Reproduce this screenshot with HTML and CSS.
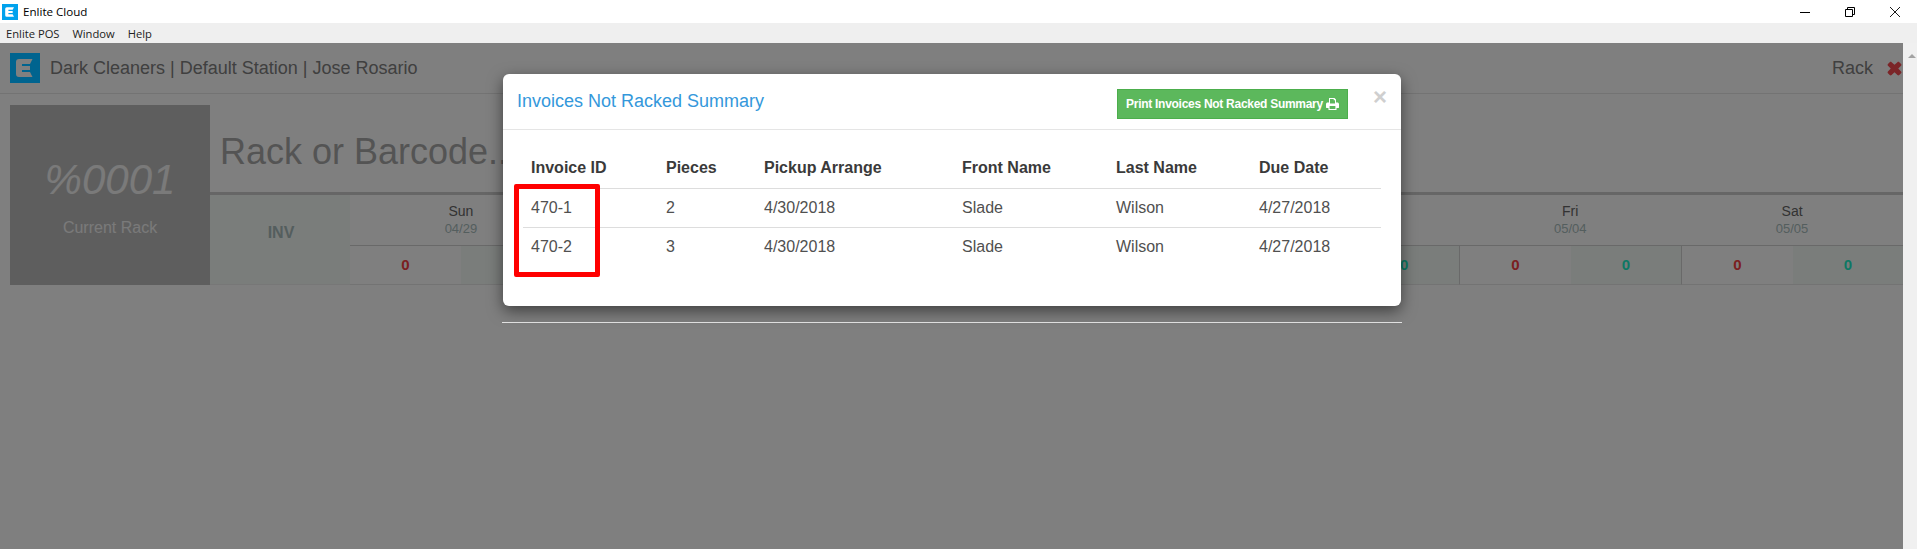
FILE: index.html
```html
<!DOCTYPE html>
<html lang="en">
<head>
<meta charset="utf-8">
<title>Enlite Cloud</title>
<link rel="stylesheet" href="styles.css">
</head>
<body>
<header class="titlebar">
  <div class="title-left">
    <svg class="app-icon" viewBox="0 0 30 30"><rect width="30" height="30" fill="#00a2ed"/><path d="M9 6H22.500L20 11H12V13H20V17H12V19H20L22.500 24H9Q6 24 6 21V9Q6 6 9 6z" fill="#fff"/></svg>
    <span>Enlite Cloud</span>
  </div>
  <div class="win-controls">
    <svg viewBox="0 0 10 10"><path d="M0 5.500h10" stroke="#000" fill="none"/></svg>
    <svg viewBox="0 0 10 10"><path d="M.5 2.500h7v7h-7zM2.500 2.500v-2h7v7h-2" stroke="#000" fill="none"/></svg>
    <svg viewBox="0 0 10 10"><path d="M0 0l10 10M10 0L0 10" stroke="#000" fill="none" stroke-width=".9"/></svg>
  </div>
</header>
<nav class="menubar"><span>Enlite POS</span><span>Window</span><span>Help</span></nav>
<div class="workspace">
  <div class="app">
    <div class="app-header">
      <div class="brand">
        <svg class="logo" viewBox="0 0 30 30"><rect width="30" height="30" fill="#00648f"/><path d="M9 6H22.500L20 11H12V13H20V17H12V19H20L22.500 24H9Q6 24 6 21V9Q6 6 9 6z" fill="#808080"/></svg>
        <span>Dark Cleaners | Default Station | Jose Rosario</span>
      </div>
      <div class="rack-tools">
        <span>Rack</span>
        <svg class="rack-x" viewBox="0 0 16 17"><path d="M15.400 12.600c0 .4-.1.700-.4 1l-1.900 1.900c-.3.300-.6.400-1 .4s-.7-.1-1-.4L8 12.600l-3.100 2.900c-.3.300-.6.400-1 .4s-.7-.1-1-.4L1 13.600c-.3-.3-.4-.6-.4-1s.1-.7.4-1l3-3-3-3c-.3-.3-.4-.6-.4-1s.1-.7.4-1l1.900-1.900c.3-.3.6-.4 1-.4s.7.1 1 .4L8 4.600l3.100-2.900c.3-.3.6-.4 1-.4s.7.1 1 .4L15 3.600c.3.3.4.600.4 1s-.1.700-.4 1l-3 3 3 3c.3.300.4.600.4 1z" fill="#f64a50"/></svg>
      </div>
    </div>
    <main class="rack-main">
      <section class="current-rack">
        <div class="rack-code">%0001</div>
        <div class="rack-label">Current Rack</div>
      </section>
      <section class="rack-panel">
        <div class="rack-input">Rack or Barcode...</div>
        <div class="week">
          <div class="inv">INV</div>
          <div class="day"><div class="day-head"><div>Sun</div><small>04/29</small></div><div class="day-cells first"><b class="out">0</b><b class="in">0</b></div></div>
          <div class="day"><div class="day-head"><div>Mon</div><small>04/30</small></div><div class="day-cells"><b class="out">0</b><b class="in">0</b></div></div>
          <div class="day"><div class="day-head"><div>Tue</div><small>05/01</small></div><div class="day-cells"><b class="out">0</b><b class="in">0</b></div></div>
          <div class="day"><div class="day-head"><div>Wed</div><small>05/02</small></div><div class="day-cells"><b class="out">0</b><b class="in">0</b></div></div>
          <div class="day"><div class="day-head"><div>Thu</div><small>05/03</small></div><div class="day-cells"><b class="out">0</b><b class="in">0</b></div></div>
          <div class="day"><div class="day-head"><div>Fri</div><small>05/04</small></div><div class="day-cells"><b class="out">0</b><b class="in">0</b></div></div>
          <div class="day"><div class="day-head"><div>Sat</div><small>05/05</small></div><div class="day-cells"><b class="out">0</b><b class="in">0</b></div></div>
        </div>
      </section>
    </main>
    <div class="backdrop"></div>
    <div class="back-line"></div>
    <div class="modal">
      <div class="modal-head">
        <h4>Invoices Not Racked Summary</h4>
        <button class="print-btn">Print Invoices Not Racked Summary
          <svg viewBox="0 0 13 12"><path fill-rule="evenodd" d="M3 0h5.500L10 1.500V4.500h1.300c.9 0 1.700.7 1.700 1.600v3.400c0 .3-.2.500-.5.500H10.500v2h-8v-2H.5c-.3 0-.5-.2-.5-.5V6.100C0 5.200.8 4.500 1.700 4.500H3zM4 1v4.500h5V2.300H7.700V1zM3.600 8v3h5.800V8z" fill="#fff"/></svg>
        </button>
        <span class="close">×</span>
      </div>
      <div class="modal-body">
        <table>
          <thead>
            <tr><th class="c1">Invoice ID</th><th class="c2">Pieces</th><th class="c3">Pickup Arrange</th><th class="c4">Front Name</th><th class="c5">Last Name</th><th>Due Date</th></tr>
          </thead>
          <tbody>
            <tr><td>470-1</td><td>2</td><td>4/30/2018</td><td>Slade</td><td>Wilson</td><td>4/27/2018</td></tr>
            <tr><td>470-2</td><td>3</td><td>4/30/2018</td><td>Slade</td><td>Wilson</td><td>4/27/2018</td></tr>
          </tbody>
        </table>
      </div>
      <div class="callout"></div>
    </div>
  </div>
  <aside class="scrollbar"><i></i></aside>
</div>
</body>
</html>
```

FILE: styles.css
```css
* { box-sizing: border-box; }
html, body { margin: 0; height: 549px; overflow: hidden; }
body { font-family: "Liberation Sans", Arial, sans-serif; background: #fff; display: flex; flex-direction: column; }

.titlebar { height: 23px; display: flex; justify-content: space-between; align-items: center; background: #fff; font: 11.6px "Open Sans", "Noto Sans", sans-serif; color: #000; }
.title-left { display: flex; align-items: center; gap: 5px; padding-left: 2px; }
.app-icon { width: 16px; height: 16px; display: block; }
.win-controls { display: flex; gap: 35px; padding-right: 17px; }
.win-controls svg { width: 10px; height: 10px; display: block; }

.menubar { height: 20px; background: #efefef; display: flex; gap: 13px; align-items: center; padding-left: 6px; font: 11.2px "Open Sans", "Noto Sans", sans-serif; color: #222; }

.workspace { flex: 1; display: flex; min-height: 0; }
.app { width: 1903px; position: relative; background: #fff; }
.scrollbar { flex: 1; background: #f0f0f0; display: flex; justify-content: center; padding-top: 11px; }
.scrollbar i { width: 0; height: 0; border: 4px solid transparent; border-top: 0; border-bottom: 4px solid #a3a3a3; margin-left: 3px; }

.app-header { height: 51px; border-bottom: 1px solid #e6e6e6; display: flex; justify-content: space-between; align-items: center; padding: 0 1px 0 10px; font-size: 18px; color: #808080; }
.brand { display: flex; align-items: center; gap: 10px; }
.logo { width: 30px; height: 30px; display: block; position: relative; z-index: 2; }
.rack-tools { display: flex; align-items: center; gap: 14px; }
.rack-x { width: 15px; height: 17px; display: block; }

.rack-main { display: flex; padding: 11px 0 0 10px; }
.current-rack { width: 200px; height: 180px; background: #bdbdbd; color: #fff; text-align: center; padding-top: 51px; }
.rack-code { font-size: 42px; font-style: italic; line-height: 48px; opacity: .85; }
.rack-label { font-size: 16px; margin-top: 15px; opacity: .85; }
.rack-panel { flex: 1; }
.rack-input { height: 90px; border-bottom: 3px solid #cccccc; font-size: 36px; color: #a9a9a9; padding: 25px 0 0 10px; line-height: 44px; }

.week { display: grid; grid-template-columns: 140px repeat(7, 1fr); height: 90px; }
.inv { background: #f5faf7; color: #a9bcbc; font-weight: bold; font-size: 16px; display: flex; align-items: center; justify-content: center; border-bottom: 1px solid #eee; padding: 0 0 14px 2px; }
.day { display: flex; flex-direction: column; }
.day-head { height: 51px; border-bottom: 1px solid #d2d2d2; text-align: center; font-size: 14px; color: #666; padding-top: 8px; }
.day-head div { line-height: 17px; }
.day-head small { display: block; font-size: 13px; line-height: 18px; color: #a8bcbc; }
.day-cells { flex: 1; display: flex; border-left: 1px solid #d2d2d2; border-bottom: 1px solid #e6e6e6; }
.day-cells.first { border-left: 0; }
.day-cells b { flex: 1; display: flex; align-items: center; justify-content: center; font-size: 15px; padding-bottom: 1px; }
.out { color: #f64040; }
.in { color: #1af0c8; background: #f5faf7; }

.backdrop { position: absolute; inset: 0; background: rgba(0, 0, 0, .5); }
.back-line { position: absolute; left: 502px; top: 279px; width: 900px; height: 1px; background: #e5e5e5; }

.modal { position: absolute; left: 503px; top: 31px; width: 898px; height: 232px; background: #fff; border-radius: 6px; box-shadow: 0 5px 15px rgba(0, 0, 0, .5); }
.modal-head { height: 56px; border-bottom: 1px solid #e5e5e5; position: relative; display: flex; align-items: center; padding: 0 0 1px 14px; }
.modal-head h4 { margin: 0; font-size: 18px; font-weight: normal; color: #3498db; }
.print-btn { position: absolute; left: 614px; top: 15px; width: 231px; height: 30px; background: #5cb85c; border: 1px solid #4cae4c; color: #fff; font: bold 12px "Liberation Sans", Arial, sans-serif; letter-spacing: -.28px; padding: 0; display: flex; align-items: center; justify-content: center; gap: 3px; }
.print-btn svg { width: 13px; height: 12px; display: block; }
.close { position: absolute; left: 870px; top: 12px; font-size: 24px; font-weight: bold; line-height: 21px; color: #cfcfcf; }

.modal-body { padding: 20px 15px 0 20px; }
table { width: 858px; border-collapse: collapse; font-size: 16px; color: #505050; table-layout: fixed; }
th { text-align: left; font-weight: bold; color: #3a3a3a; height: 38px; padding: 0 8px 1px; border-bottom: 1px solid #ddd; }
td { height: 39px; padding: 1px 8px 0; border-bottom: 1px solid #ddd; }
tbody tr:last-child td { border-bottom: 0; }
.c1 { width: 135px; }
.c2 { width: 98px; }
.c3 { width: 198px; }
.c4 { width: 154px; }
.c5 { width: 143px; }

.callout { position: absolute; left: 11px; top: 110px; width: 86px; height: 93px; border: 5px solid #ff0000; border-radius: 2px; }
```
